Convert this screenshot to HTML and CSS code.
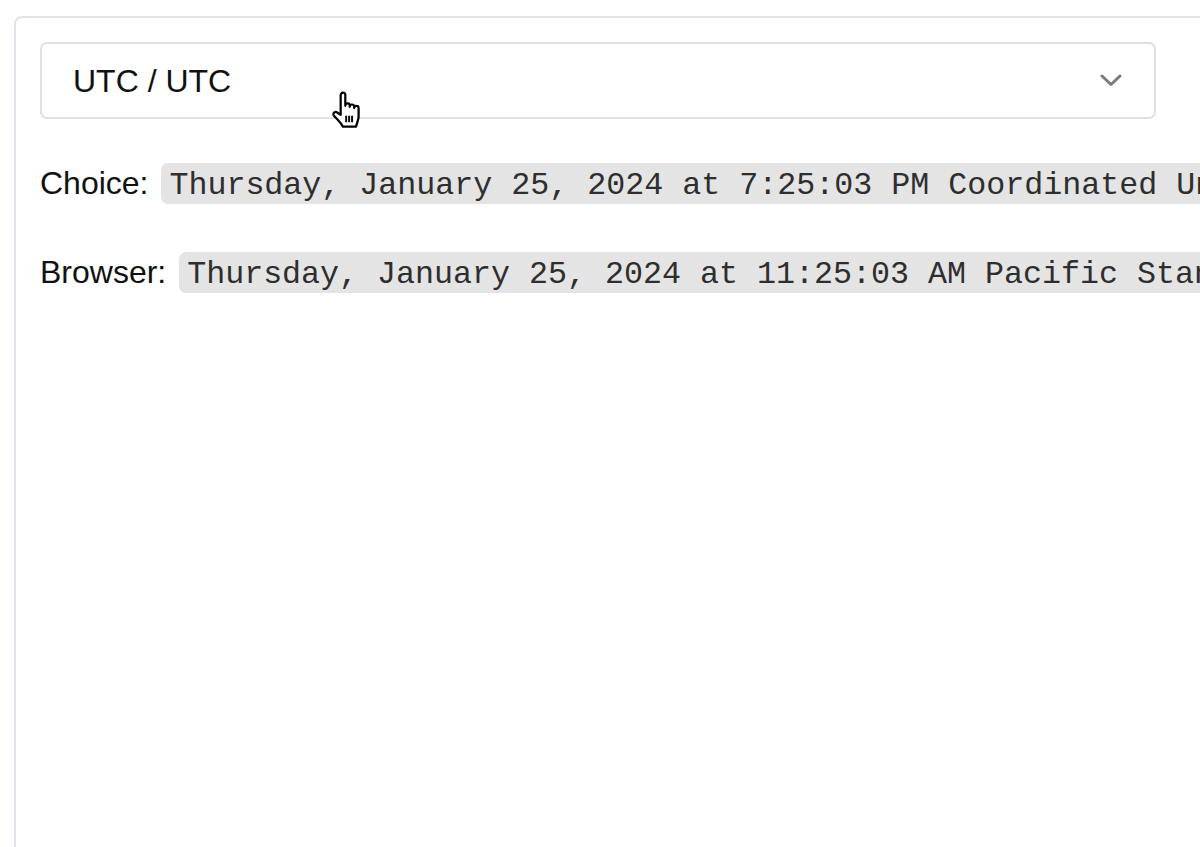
FILE: index.html
```html
<!DOCTYPE html>
<html>
<head>
<meta charset="utf-8">
<link rel="stylesheet" href="styles.css">
</head>
<body>
<div class="card">
  <div class="select">
    <span class="select-value">UTC / UTC</span>
    <svg class="chevron" width="22" height="13" viewBox="0 0 22 13"><path d="M2 2 L11 10.5 L20 2" fill="none" stroke="#7a7a7a" stroke-width="3" stroke-linecap="round" stroke-linejoin="round"/></svg>
    <svg class="cursor" width="32" height="38" viewBox="0 0 30 36"><path d="M9 4 c0-1.4 1-2.4 2.2-2.4 s2.2 1 2.2 2.4 v10 c0-1.3 1-2.2 2.1-2.2 s2.1 .9 2.1 2.2 v1 c0-1.3 1-2.2 2.1-2.2 s2.1 .9 2.1 2.2 v1.2 c0-1.3 1-2.2 2.1-2.2 s2.1 .9 2.1 2.2 v8 c0 4-2 6.5-2.4 9.6 H11.2 c-1-2.2-3-4.5-5-6.6 l-3.4-3.6 c-.9-1-.9-2.3 0-3.1 s2.3-.8 3.2 .1 L9 22.5 Z" fill="#fff" stroke="#000" stroke-width="2.1" stroke-linejoin="round"/><path d="M14.2 23.5 v6 M17 23.5 v6 M19.8 23.5 v6" stroke="#000" stroke-width="1.8"/></svg>
  </div>
  <p class="line">Choice: <code>Thursday, January 25, 2024 at 7:25:03 PM Coordinated Universal Time</code></p>
  <p class="line">Browser: <code>Thursday, January 25, 2024 at 11:25:03 AM Pacific Standard Time</code></p>
</div>
</body>
</html>
```
FILE: styles.css
```css
html, body {
  margin: 0;
  padding: 0;
  background: #fff;
  overflow: hidden;
}
body {
  padding: 16px 0 0 14px;
  font-family: "Liberation Sans", Arial, sans-serif;
  color: #111;
}
.card {
  width: 1400px;
  height: 900px;
  border: 2px solid #e2e2ea;
  border-radius: 8px;
  padding: 24px;
  box-sizing: border-box;
  white-space: nowrap;
}
.select {
  position: relative;
  width: 1116px;
  height: 77px;
  box-sizing: border-box;
  border: 2px solid #e0e0e0;
  border-radius: 7px;
  display: flex;
  align-items: center;
  justify-content: space-between;
  padding: 0 32px 0 31px;
  font-size: 32px;
}
.select-value {
  line-height: 1;
}
.chevron {
  display: block;
}
.cursor {
  position: absolute;
  left: 289px;
  top: 47px;
}
.line {
  font-size: 32px;
  line-height: 48px;
  margin: 40px 0 0 0;
}
.line + .line {
  margin-top: 38px;
}
code {
  font-family: "Liberation Mono", "DejaVu Sans Mono", monospace;
  font-size: 31.67px;
  color: #2e2e2e;
  background: #e4e4e4;
  border-radius: 7px;
  padding: 5px 8px 0 8px;
  margin-left: 4px;
}
```
